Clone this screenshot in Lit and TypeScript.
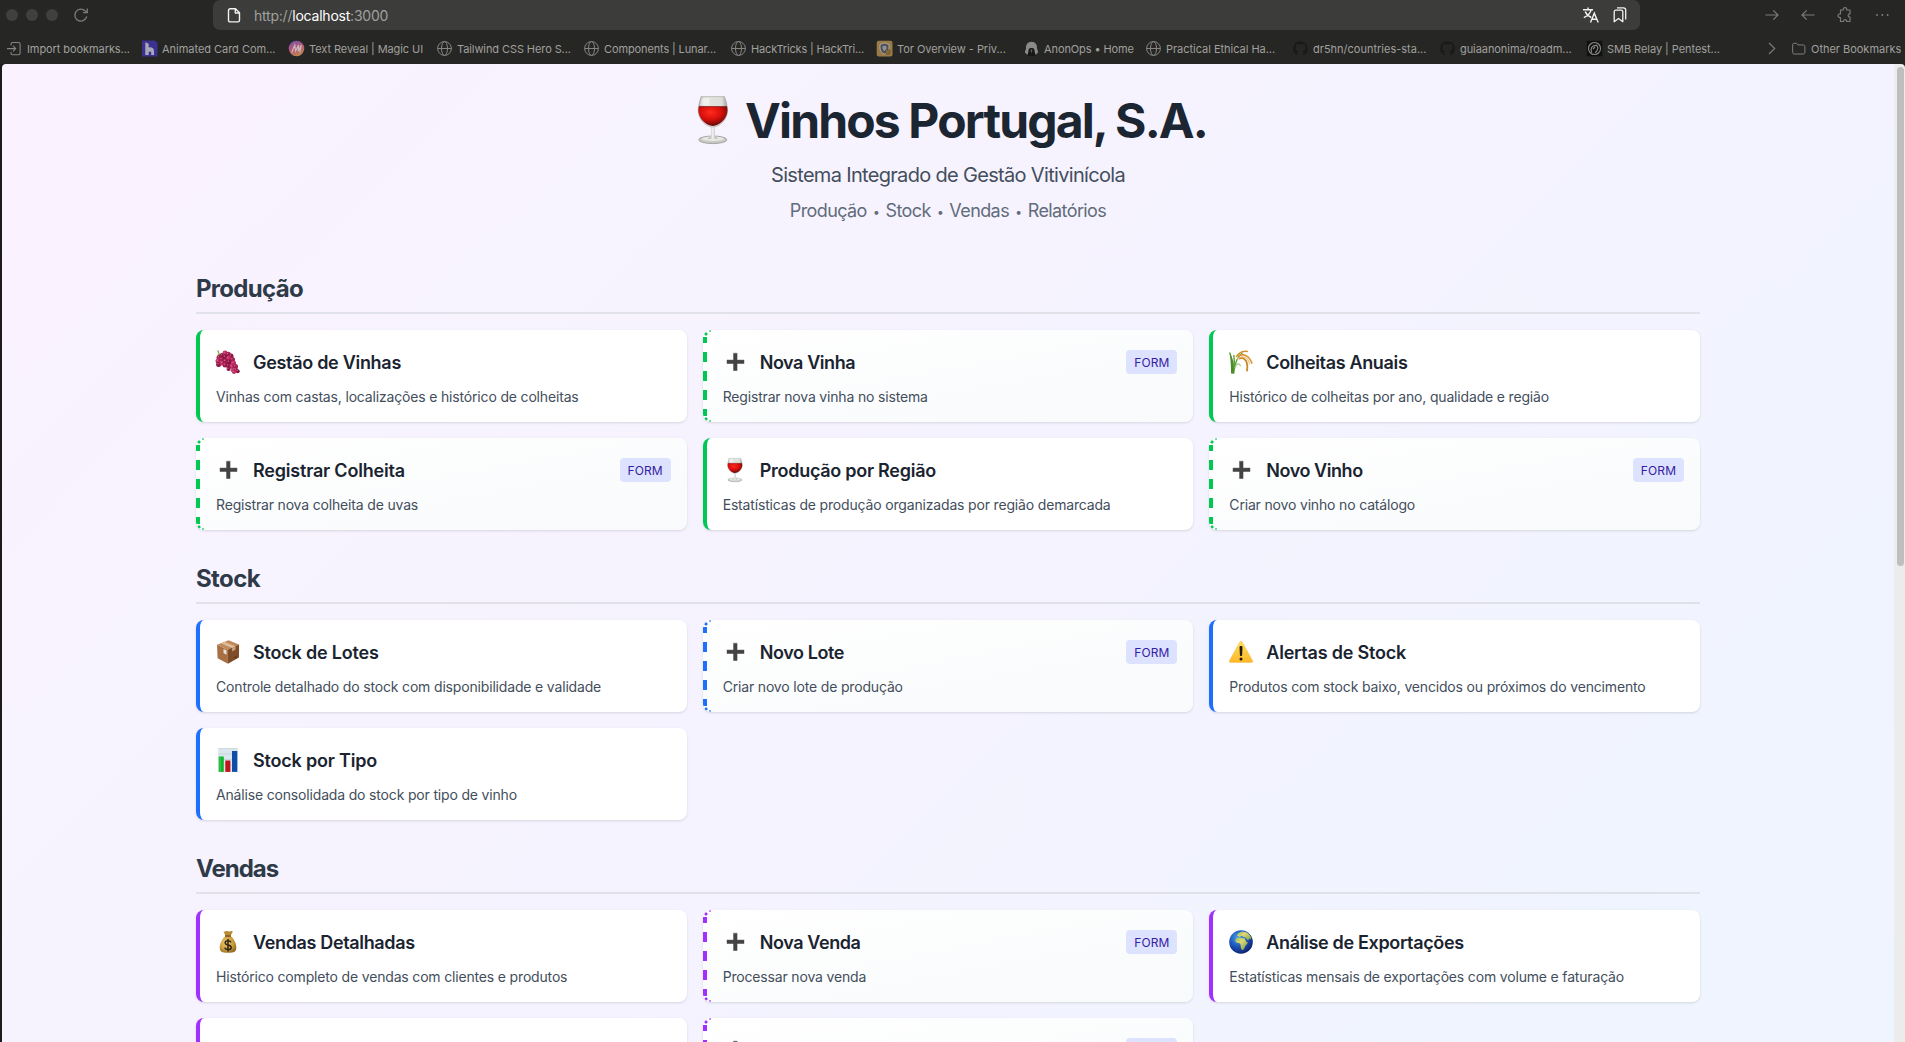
import { LitElement, html, svg, css, nothing } from "lit";
import { customElement, property } from "lit/decorators.js";
import { styleMap } from "lit/directives/style-map.js";

type Card = { icon: string; title: string; text: string; spacing: number; form?: boolean };
type Section = { name: string; tone: string; spacing: number; cards: Card[] };

const SECTIONS: Section[] = [
  {
    name: "Produção", tone: "green", spacing: -0.7,
    cards: [
      { icon: "grapes", title: "Gestão de Vinhas", text: "Vinhas com castas, localizações e histórico de colheitas", spacing: -0.3 },
      { icon: "plus", title: "Nova Vinha", text: "Registrar nova vinha no sistema", spacing: -0.42, form: true },
      { icon: "rice", title: "Colheitas Anuais", text: "Histórico de colheitas por ano, qualidade e região", spacing: -0.34 },
      { icon: "plus", title: "Registrar Colheita", text: "Registrar nova colheita de uvas", spacing: -0.2, form: true },
      { icon: "wine", title: "Produção por Região", text: "Estatísticas de produção organizadas por região demarcada", spacing: -0.27 },
      { icon: "plus", title: "Novo Vinho", text: "Criar novo vinho no catálogo", spacing: -0.45, form: true },
    ],
  },
  {
    name: "Stock", tone: "blue", spacing: -0.62,
    cards: [
      { icon: "package", title: "Stock de Lotes", text: "Controle detalhado do stock com disponibilidade e validade", spacing: -0.19 },
      { icon: "plus", title: "Novo Lote", text: "Criar novo lote de produção", spacing: -0.4, form: true },
      { icon: "warning", title: "Alertas de Stock", text: "Produtos com stock baixo, vencidos ou próximos do vencimento", spacing: -0.22 },
      { icon: "chart", title: "Stock por Tipo", text: "Análise consolidada do stock por tipo de vinho", spacing: -0.2 },
    ],
  },
  {
    name: "Vendas", tone: "purple", spacing: -1,
    cards: [
      { icon: "money", title: "Vendas Detalhadas", text: "Histórico completo de vendas com clientes e produtos", spacing: -0.35 },
      { icon: "plus", title: "Nova Venda", text: "Processar nova venda", spacing: -0.4, form: true },
      { icon: "globe", title: "Análise de Exportações", text: "Estatísticas mensais de exportações com volume e faturação", spacing: -0.34 },
      { icon: "", title: "", text: "", spacing: 0 },
      { icon: "plus", title: "", text: "", spacing: 0, form: true },
    ],
  },
];

const EMOJI: Record<string, unknown> = {
  wine: svg`
    <defs>
      <linearGradient id="gl" x1="0" x2="1"><stop offset="0" stop-color="#a9a9a6"/><stop offset=".2" stop-color="#e4e4e1"/><stop offset=".8" stop-color="#dededb"/><stop offset="1" stop-color="#9b9b98"/></linearGradient>
      <radialGradient id="wn" cx=".42" cy=".3" r=".75"><stop offset="0" stop-color="#ff2b1c"/><stop offset=".5" stop-color="#d60f0c"/><stop offset="1" stop-color="#4d0a0a"/></radialGradient>
      <linearGradient id="st" x1="0" x2="1"><stop offset="0" stop-color="#8f8f8c"/><stop offset=".5" stop-color="#f4f4f2"/><stop offset="1" stop-color="#8f8f8c"/></linearGradient>
    </defs>
    <ellipse cx="11.900" cy="21.900" rx="7" ry="1.900" fill="#c9c9c6" stroke="#8c8c89" stroke-width=".35"/>
    <ellipse cx="11.900" cy="21.400" rx="5.600" ry="1.100" fill="#e8e8e5"/>
    <path d="M11.100 15h1.700l.2 5.300 1.400 1.100h-5l1.500-1.100z" fill="url(#st)"/>
    <path d="M6 .3h11.800c.7 2.200 1.500 4.600 1.500 7 0 4-3.600 8.200-7.400 8.200S4.600 11.300 4.600 7.300c0-2.400.8-4.800 1.400-7z" fill="url(#gl)" stroke="#a5a5a2" stroke-width=".3"/>
    <path d="M4.900 5.300h14.100c.1.600.2 1.300.2 2 0 3.700-3.800 7.700-7.300 7.700S4.700 11 4.700 7.300c0-.7.100-1.400.2-2z" fill="url(#wn)"/>
    <path d="M5 5.300h14" stroke="#7a1512" stroke-width=".35"/>
    <path d="M6.600 1.200c-.5 1.300-.8 2.300-1 3.400h4.600V1.200z" fill="#fff" opacity=".45"/>`,
  grapes: svg`
    <path d="M2 .3c-.2 2 .9 3.500 3 4.800l1.500 1.300M5 4.800c-1.500-.6-2.600-.3-3.500.4" fill="none" stroke="#7fa34b" stroke-width="1.100"/>
    ${[[3, 7.5], [6, 5.5], [9, 3], [12.3, 4.2], [15, 6], [2, 11], [5.5, 9.3], [9, 7], [12.5, 8.3], [16.5, 9.5], [2.6, 14.5], [6, 13], [9.4, 11], [13, 12], [17.5, 13], [9, 15], [12.5, 15.8], [16, 16.5], [19.5, 16.5], [12.5, 19], [16.5, 20], [20, 19.8], [21.7, 21.2], [18, 22]].map(
      ([x, y], i) => svg`<circle cx=${x} cy=${y} r=${i > 18 ? 2 : 2.5} fill=${["#a31d50", "#8a1540", "#bd2c63"][i % 3]}/><circle cx=${x - 0.7} cy=${y - 0.8} r=".7" fill="#e77ba4" opacity=".8"/>`
    )}`,
  plus: svg`<path d="M10.300 3.200h4v6.800h6.900v3.800h-6.900v6.900h-4v-6.900H3.800V10h6.500z" fill="#434343"/><path d="M10.300 3.200h4M3.800 10h6.500M14.300 10h6.900" stroke="#676767" stroke-width=".5"/>`,
  rice: svg`
    <path d="M4.200 23.500 3.800 12 .6 2.500M4.500 23.500 5.500 13 4.800 5M4.700 23C5.500 15 8 7 13.500 2.800" fill="none" stroke="#5fa136" stroke-width="1.400"/>
    <path d="M2 23.600C2.200 17 1.500 9 .8 3.500 3.800 8 5 16 5.200 23.600z" fill="#4b8c2a"/>
    <path d="M6 18c1-3.500 3-6 5.800-2" fill="none" stroke="#a6cf8a" stroke-width="1.300"/>
    <g fill="none" stroke-linecap="round" stroke-dasharray="1.600 .7">
      <path d="M7.500 6.500C10 2.500 14 .8 18.300 1.500" stroke="#d0912f" stroke-width="1.500"/>
      <path d="M9.500 6C14.500 3.300 20 5.500 22.800 13" stroke="#d99b3d" stroke-width="1.700"/>
      <path d="M10.500 8.500C15 6.500 19.500 11 18 20.500" stroke="#c98a2c" stroke-width="1.900"/>
      <path d="M8.500 9C13 5 19 6.500 20.500 14" stroke="#ecc27a" stroke-width="1.100"/>
    </g>`,
  package: svg`
    <path d="m12.600.2 10.500 4.300-10.500 5.400L1 4.700z" fill="#c08a5c"/>
    <path d="m1 4.700 10.900 5.100v14L1.600 18.200z" fill="#a86f43"/>
    <path d="M23.100 4.500 11.900 9.800v14L23 17.600z" fill="#7e4d27"/>
    <path d="m8.900 1.900 10.600 4.500-3.400 1.600L5.400 3.500z" fill="#dfbd98"/>
    <path d="m16.100 8 3.400-1.600v3.300L16.100 11.500z" fill="#c6a079"/>
    <path d="m7.500 9 3 1.400v4.300l-3-1.600z" fill="#e9e4dc"/>
    <path d="m18.500 17 2-1.100v1.600l-2 1z" fill="#4d2f18"/>`,
  warning: svg`
    <defs><linearGradient id="wr" x1="0" y1="0" x2="0" y2="1"><stop offset="0" stop-color="#ffdf5b"/><stop offset="1" stop-color="#fdb827"/></linearGradient></defs>
    <path d="M12 1.200c.6 0 1 .3 1.300.9l10.300 18.600c.5 1-.1 1.700-1 1.700H1.400c-.9 0-1.500-.7-1-1.700L10.700 2.100c.3-.6.700-.9 1.300-.9z" fill="url(#wr)" stroke="#e9a51e" stroke-width=".3"/>
    <path d="M10.500 7.300c0-.9.600-1.400 1.500-1.400s1.500.5 1.500 1.400l-.4 7.700c0 .7-.4 1.100-1.100 1.100s-1.100-.4-1.100-1.100z" fill="#1f1a10"/><circle cx="12" cy="19" r="1.500" fill="#1f1a10"/>`,
  chart: svg`
    <path d="M2.200.2h19.600v23.700H2.200z" fill="#dde8ee"/><path d="M2.200.6h19.600M2.200 6h19.600M2.200 11.500h19.600M2.200 17h19.600" stroke="#bccad3" stroke-width=".6"/>
    <path d="M2.700 8.500h5.100v15.400H2.700z" fill="#12b32d"/><path d="M9.300 12.500h5.100v11.400H9.300z" fill="#c3131b"/><path d="M16 3h5.300v20.900H16z" fill="#0f4ea8"/>
    <path d="M3.500 8.500h1.300v15.400H3.500z" fill="#3dd957" opacity=".7"/>`,
  money: svg`
    <defs><radialGradient id="mb" cx=".4" cy=".4" r=".7"><stop offset="0" stop-color="#efcf73"/><stop offset=".6" stop-color="#c99a3a"/><stop offset="1" stop-color="#8a6420"/></radialGradient></defs>
    <path d="M7.500 1.200c2 .9 2.400-.7 4.500 0s3-.8 4.800.2L14.500 6h-5z" fill="#b98a34"/>
    <path d="M9.500 6h5.200c3.500 3 5.600 7.500 5.600 11.500 0 4-2 5.300-8.300 5.300s-8.300-1.300-8.300-5.300C3.700 13.500 6 9 9.500 6z" fill="url(#mb)"/>
    <path d="M9 5.200h6v1.700H9z" fill="#8f5b22"/>
    <path d="M15 12.300c-.6-1.100-1.600-1.600-3-1.600-1.700 0-2.800.8-2.800 2 0 3.300 6 1.500 6 4.700 0 1.300-1.200 2.200-3.100 2.200-1.700 0-2.900-.7-3.300-2M12 9v12.500" fill="none" stroke="#2e2716" stroke-width="1.500"/>`,
  globe: svg`
    <defs><radialGradient id="gb" cx=".38" cy=".32" r=".75"><stop offset="0" stop-color="#4ba4ea"/><stop offset=".5" stop-color="#1d55bb"/><stop offset="1" stop-color="#0a1c66"/></radialGradient>
    <linearGradient id="ld" x1="0" y1="0" x2="1" y2="1"><stop offset="0" stop-color="#8fbf5a"/><stop offset=".4" stop-color="#dfd873"/><stop offset="1" stop-color="#6f9a3c"/></linearGradient></defs>
    <circle cx="12" cy="12" r="11.800" fill="url(#gb)"/>
    <path d="M6.500 9.500c-.6 1.600.3 3.300 2 3.500 1.400.2 2.600 0 2.900 1.200.4 1.500.2 3.300 1 5 .5 1.200 1.900 1 2.600-.2.700-1.100.6-2.200 1.500-3.300.8-1 2.200-2 2.300-3.400-.9.200-1.500-.3-1.900-1.300L15.600 8.300c-1.800.4-2.700-.6-4.300-.7-2-.1-4.200.2-4.800 1.900z" fill="url(#ld)"/>
    <path d="M8 5.800C8.300 3.500 10.500 1.500 14 1.400c4 .4 7 3 8.400 6.600-.6 1.500-1.500 1.500-2.300.6l-.9 2.200-2.600-3.100-2.300-.6-1.500-1.300-2.300.9z" fill="url(#ld)"/>`,
};

const emoji = (name: string, cls: string) => svg`<svg class=${cls} viewBox="0 0 24 24">${EMOJI[name] ?? nothing}</svg>`;

const GLOBE = svg`<g fill="none" stroke="#858583" stroke-width="1"><circle cx="7.500" cy="7.500" r="6.900"/><ellipse cx="7.500" cy="7.500" rx="3" ry="6.900"/><path d="M.6 7.500h13.800"/></g>`;
const GITHUB = svg`<path d="M7.500.2a7.300 7.300 0 0 0-2.600 14.100v-2.100c-1.700.3-2.300-.9-2.700-1.700 1.200.1 1.200 1 2.700.8 0-.5.2-.9.500-1.200-1.900-.2-3-1.100-3-3.400 0-.8.300-1.500.8-2-.2-.6-.2-1.300.1-2 .8 0 1.500.4 2.100.8a7 7 0 0 1 4.200 0c.6-.4 1.300-.8 2.100-.8.300.7.300 1.400.1 2 .5.5.8 1.200.8 2 0 2.300-1.100 3.200-3 3.400.3.300.5.800.5 1.500v2.700A7.300 7.300 0 0 0 7.500.2z" fill="#1a1a19"/>`;

const FAVICONS: Record<string, unknown> = {
  import: svg`<path d="M4 4.200V3c0-1 .6-1.500 1.500-1.500h6c1 0 1.600.6 1.600 1.500v9.200c0 .9-.6 1.500-1.600 1.500h-6c-.9 0-1.500-.6-1.500-1.500V11M0 7.600h8.500M6 4.900l2.700 2.700L6 10.300" fill="none" stroke="#858583" stroke-width="1.100"/>`,
  card: svg`<path d="M0-.5h13l2.500 2.500v13.500H0z" fill="#3b318f"/><path d="M3.300 1.200 6.700 2.800v3.700c3-.6 5.300.8 5.300 3.500v4H9.200v-3.200H6.700V14H3.300z" fill="#a9a7ba"/>`,
  magic: svg`<defs><linearGradient id="mg" x1=".2" y1="0" x2=".6" y2="1"><stop offset="0" stop-color="#7552b0"/><stop offset=".5" stop-color="#b75a75"/><stop offset="1" stop-color="#bd8750"/></linearGradient></defs><circle cx="7.500" cy="7.500" r="7.800" fill="url(#mg)"/><path d="m2.800 11.500 3-7.500.8 6 3-6-.4 6 3.200-6-1.800 7.500" fill="none" stroke="#c9b9bd" stroke-width="1.100"/>`,
  globe: GLOBE,
  tor: svg`<rect x="-.3" y="-.3" width="15.800" height="15.800" rx="2" fill="#9a7b45"/><path d="m7.500 2 4.500 1.500v3.500c0 3-2 5-4.500 6-2.500-1-4.500-3-4.500-6V3.500z" fill="#4d4d55" stroke="#a8a6a0" stroke-width="1"/><path d="m7.500 4.500 2 .7v2c0 1.300-.9 2.200-2 2.700-1.100-.5-2-1.400-2-2.700v-2z" fill="#8f8f94"/><circle cx="10.800" cy="11" r="2.300" fill="#8e6c35" stroke="#55452a" stroke-width=".7"/>`,
  anon: svg`<path d="M7.500.8C3.600.8 1.700 4 2 7.500L.8 11.200 3 13.500 12 13.500l2.200-2.300L13 7.500C13.300 4 11.400.8 7.500.8z" fill="#8a8a88"/><path d="M4.800 8c1.200-1.300 4.200-1.300 5.400 0l1.300 7h-8z" fill="#171716"/><path d="m6.600 8.500.9 4 .9-4" fill="#666"/>`,
  github: GITHUB,
  smb: svg`<path d="M-.2-.2h15.500v15.500H-.2z" fill="#111110"/><circle cx="7.500" cy="7.500" r="6" fill="none" stroke="#8b8b89" stroke-width="1.100"/><path d="M4.800 11.500C3 8 4.500 4 9.500 4.300c2 1.500 1.800 4.500-1.300 7.500M6 8l2-2" fill="none" stroke="#8b8b89" stroke-width="1.200"/>`,
  folder: svg`<path d="M.7 3.600c0-1.100.6-1.700 1.700-1.700h2.500l1.600 1.800h5.600c1 0 1.700.6 1.700 1.700v6.300c0 1-.7 1.700-1.700 1.700H2.400c-1.100 0-1.700-.7-1.700-1.700z" fill="none" stroke="#858583" stroke-width="1"/>`,
};

const BOOKMARKS: [string, string, number, number][] = [
  ["import", "Import bookmarks...", 135, -0.08],
  ["card", "Animated Card Com...", 147, -0.03],
  ["magic", "Text Reveal | Magic UI", 148, -0.07],
  ["globe", "Tailwind CSS Hero S...", 147, -0.09],
  ["globe", "Components | Lunar...", 147, -0.12],
  ["globe", "HackTricks | HackTri...", 146, -0.15],
  ["tor", "Tor Overview - Priv...", 147, -0.04],
  ["anon", "AnonOps • Home", 122, -0.1],
  ["globe", "Practical Ethical Ha...", 147, -0.03],
  ["github", "dr5hn/countries-sta...", 147, 0],
  ["github", "guiaanonima/roadm...", 147, -0.07],
  ["smb", "SMB Relay | Pentest...", 181, -0.05],
];

@customElement("browser-chrome")
class BrowserChrome extends LitElement {
  static styles = css`
    :host { display: flex; flex-direction: column; height: 64px; flex: none; background: #262624; font-family: Inter, "Liberation Sans", sans-serif; }
    svg { display: block; flex: none; overflow: visible; }
    .bar { display: flex; align-items: center; height: 30px; }
    .lights { display: flex; gap: 8px; padding-left: 6px; }
    .light { width: 12px; height: 12px; border-radius: 50%; background: #40403e; }
    .reload { margin-left: 15px; }
    .url { display: flex; align-items: center; box-sizing: border-box; width: 1427px; height: 30px; margin-left: 124px; padding: 0 13px 0 14px; border-radius: 7px; background: #3c3c3a; }
    .addr { flex: 1; margin-left: 13px; font-size: 14px; line-height: 18px; letter-spacing: -0.22px; color: #a0a09e; padding-top: 2px; }
    .host { color: #fff; }
    .pins { display: flex; gap: 14px; align-items: center; }
    .tools { display: flex; align-items: center; gap: 22px; margin-left: 125px; }
    .marks { display: flex; align-items: center; height: 34px; padding: 2px 0 0 7px; box-sizing: border-box; margin-top: 1px; }
    .mark { display: flex; align-items: center; gap: 5px; flex: none; white-space: nowrap; font-size: 11px; line-height: 14px; color: #a0a09e; }
  `;
  render() {
    return html`
      <div class="bar">
        <div class="lights"><span class="light"></span><span class="light"></span><span class="light"></span></div>
        <svg class="reload" width="16" height="16" viewBox="0 0 16 16" fill="none" stroke="#7b7b79" stroke-width="1.300"><path d="M13.700 9.300A6 6 0 1 1 12 3.800l1.800 1.600M14.300 1.500v4.200h-4.200"/></svg>
        <div class="url">
          <svg width="14" height="15" viewBox="0 0 14 15" fill="none" stroke="#f2f2f2" stroke-width="1.400" stroke-linejoin="round"><path d="M3.200.8h5.300l4 4v7.400c0 1-.7 1.700-1.700 1.700H3.200c-1 0-1.700-.7-1.700-1.700V2.500c0-1 .7-1.700 1.700-1.700zM8.300.8v4.200h4.200"/></svg>
          <div class="addr">http://<span class="host">localhost</span>:3000</div>
          <div class="pins">
            <svg width="16" height="16" viewBox="0 0 16 16" fill="none" stroke="#f2f2f2" stroke-width="1.400"><path d="M0 2.700h10M5 .5v2.200M8.200 2.700C7.500 6 4.500 9 .8 10.700M2.200 4.500c1 2.500 3.300 4.700 6 6M7.500 15.500l3.800-9.300 3.900 9.300M8.900 12.300h4.900"/></svg>
            <svg width="14" height="16" viewBox="0 0 14 16" fill="none" stroke="#f2f2f2" stroke-width="1.300" stroke-linejoin="round"><path d="M1.200 4.800c0-1 .6-1.700 1.600-1.700h5.400c1 0 1.600.7 1.600 1.700v9.900L5.500 11.500l-4.300 3.200zM4 .9h6.500c1.300 0 2.200.9 2.200 2.200v9.300"/></svg>
          </div>
        </div>
        <div class="tools">
          <svg width="14" height="14" viewBox="0 0 14 14" fill="none" stroke="#7b7b79" stroke-width="1.200"><path d="M.5 7h12.500M8.300 2.300 13 7l-4.700 4.700"/></svg>
          <svg width="14" height="14" viewBox="0 0 14 14" fill="none" stroke="#7b7b79" stroke-width="1.200"><path d="M13.500 7H1M5.700 2.300 1 7l4.700 4.700"/></svg>
          <svg width="16" height="16" viewBox="0 0 16 16" fill="none" stroke="#7b7b79" stroke-width="1.200" stroke-linejoin="round"><path d="M3.500 3h2.800c-.6-3.200 4-3.200 3.400 0H13v3.800c-.7 0-1.900.2-1.900 1.600S12.300 10 13 10v4.500H9.700c.3-2.500-3.400-2.500-3.200 0h-3V10.500C.2 11 .2 6.400 3.500 7z"/></svg>
          <svg width="14" height="4" viewBox="0 0 14 4" fill="#7b7b79"><circle cx="2" cy="2" r="1"/><circle cx="7.300" cy="2" r="1"/><circle cx="12.600" cy="2" r="1"/></svg>
        </div>
      </div>
      <div class="marks">
        ${BOOKMARKS.map(([icon, text, width, spacing]) => html`
          <div class="mark" style=${styleMap({ width: `${width}px`, letterSpacing: `${spacing}px` })}>
            <svg width="15" height="15" viewBox="0 0 15 15">${FAVICONS[icon]}</svg><span>${text}</span>
          </div>`)}
        <div class="mark" style=${styleMap({ width: "24px" })}>
          <svg width="8" height="13" viewBox="0 0 8 13" fill="none" stroke="#7b7b79" stroke-width="1.200"><path d="m1 1 5.700 5.500L1 12"/></svg>
        </div>
        <div class="mark" style=${styleMap({ letterSpacing: "-0.02px" })}>
          <svg width="14" height="15" viewBox="0 0 15 15">${FAVICONS.folder}</svg><span>Other Bookmarks</span>
        </div>
      </div>`;
  }
}

@customElement("menu-card")
class MenuCard extends LitElement {
  @property({ attribute: false }) card!: Card;
  @property() tone = "green";
  static styles = css`
    :host { display: block; }
    .card { box-sizing: border-box; height: 92px; padding: 16px; border-left: 4px solid var(--tone); border-radius: 8px; background: #fff; box-shadow: 0 1px 3px rgba(0,0,0,.1), 0 1px 2px -1px rgba(0,0,0,.1); }
    .form {
      border-left: 0;
      padding-left: 20px;
      background:
        repeating-linear-gradient(to bottom, var(--tone) 0 6px, transparent 6px 15px, var(--tone) 15px 19px) 0 7px / 4px 79px no-repeat,
        radial-gradient(circle, var(--tone) 1.2px, transparent 1.9px) 1px 1.500px / 4px 4px no-repeat,
        radial-gradient(circle, var(--tone) 1.2px, transparent 1.9px) 1px 87px / 4px 4px no-repeat,
        radial-gradient(circle, var(--tone) .5px, transparent 1px) 6px 0 / 2px 2px no-repeat,
        radial-gradient(circle, var(--tone) .5px, transparent 1px) 6px 90px / 2px 2px no-repeat,
        linear-gradient(to bottom right, #fff, #f8fafb);
    }
    .green { --tone: #00c853; }
    .blue { --tone: #1f6fff; }
    .purple { --tone: #a12fff; }
    .row { display: flex; align-items: center; gap: 13px; height: 32px; margin-bottom: 8px; }
    .icon { width: 24px; height: 24px; flex: none; overflow: visible; }
    .title { flex: 1; margin: 0; padding-top: 2px; font-size: 18px; line-height: 28px; font-weight: 600; color: #1a2430; white-space: nowrap; }
    .badge { box-sizing: border-box; width: 51px; height: 24px; border-radius: 4px; padding: 5px 0 3px; text-align: center; background: #dde3ff; color: #3520a3; font-size: 12px; line-height: 16px; letter-spacing: .1px; }
    .text { margin: 0; padding-top: 1px; font-size: 14px; line-height: 20px; letter-spacing: -0.170px; color: #434e5c; white-space: nowrap; }
  `;
  render() {
    const c = this.card;
    return html`
      <div class="card ${this.tone} ${c.form ? "form" : ""}">
        <div class="row">
          ${emoji(c.icon, "icon")}
          <h3 class="title" style=${styleMap({ letterSpacing: `${c.spacing}px` })}>${c.title}</h3>
          ${c.form ? html`<span class="badge">FORM</span>` : nothing}
        </div>
        <p class="text">${c.text}</p>
      </div>`;
  }
}

@customElement("app-root")
class AppRoot extends LitElement {
  static styles = css`
    :host { display: flex; flex-direction: column; width: 1905px; height: 1042px; overflow: hidden; background: #1c1c1b; font-family: Inter, "Liberation Sans", sans-serif; }
    .view { flex: 1; min-height: 0; display: flex; margin-left: 2px; border-radius: 4px 4px 0 0; overflow: hidden; }
    .page { flex: 1; min-width: 0; overflow: hidden; background: linear-gradient(135deg, #fbf2ff, #f7f3ff 25%, #f5f3ff 50%, #f0f4ff 85%, #eff5ff); }
    .inner { width: 1504px; margin: 0 auto; padding-top: 33px; }
    .head { text-align: center; margin-bottom: 48px; }
    .brand { display: flex; justify-content: center; align-items: center; gap: 8px; margin: 0 0 16px; height: 48px; font-size: 48px; line-height: 48px; font-weight: 700; letter-spacing: -1.850px; color: #1c2632; white-space: nowrap; }
    .glass { width: 48px; height: 48px; flex: none; overflow: visible; margin-top: -2px; }
    .sub { margin: 0 0 8px; font-size: 20px; line-height: 28px; letter-spacing: -0.680px; color: #434e5c; }
    .tag { margin: 0; font-size: 18px; line-height: 28px; letter-spacing: -0.600px; color: #626c7a; }
    .dot { font-size: 12px; margin: 0 1.800px; vertical-align: 1px; line-height: 1; }
    .section { margin-bottom: 32px; }
    .name { margin: 0 0 16px; padding-bottom: 7px; border-bottom: 2px solid #e1e2e9; font-size: 24px; line-height: 32px; font-weight: 700; color: #2f3a48; }
    .section + .section .name { padding-top: 1px; }
    .grid { display: grid; grid-template-columns: repeat(3, minmax(0, 1fr)); gap: 16px; }
    .scroll { width: 11px; flex: none; box-sizing: border-box; padding: 3px 1px 0 3px; background: #ececec; }
    .thumb { height: 499px; border-radius: 4px; background: #bfbfbf; }
  `;
  render() {
    const dot = html`<span class="dot">•</span>`;
    return html`
      <browser-chrome></browser-chrome>
      <div class="view">
        <main class="page">
          <div class="inner">
            <header class="head">
              <h1 class="brand">${emoji("wine", "glass")}<span>Vinhos Portugal, S.A.</span></h1>
              <p class="sub">Sistema Integrado de Gestão Vitivinícola</p>
              <p class="tag">Produção ${dot} Stock ${dot} Vendas ${dot} Relatórios</p>
            </header>
            ${SECTIONS.map((s) => html`
              <section class="section">
                <h2 class="name" style=${styleMap({ letterSpacing: `${s.spacing}px` })}>${s.name}</h2>
                <div class="grid">${s.cards.map((c) => html`<menu-card .card=${c} tone=${s.tone}></menu-card>`)}</div>
              </section>`)}
          </div>
        </main>
        <div class="scroll"><div class="thumb"></div></div>
      </div>`;
  }
}
